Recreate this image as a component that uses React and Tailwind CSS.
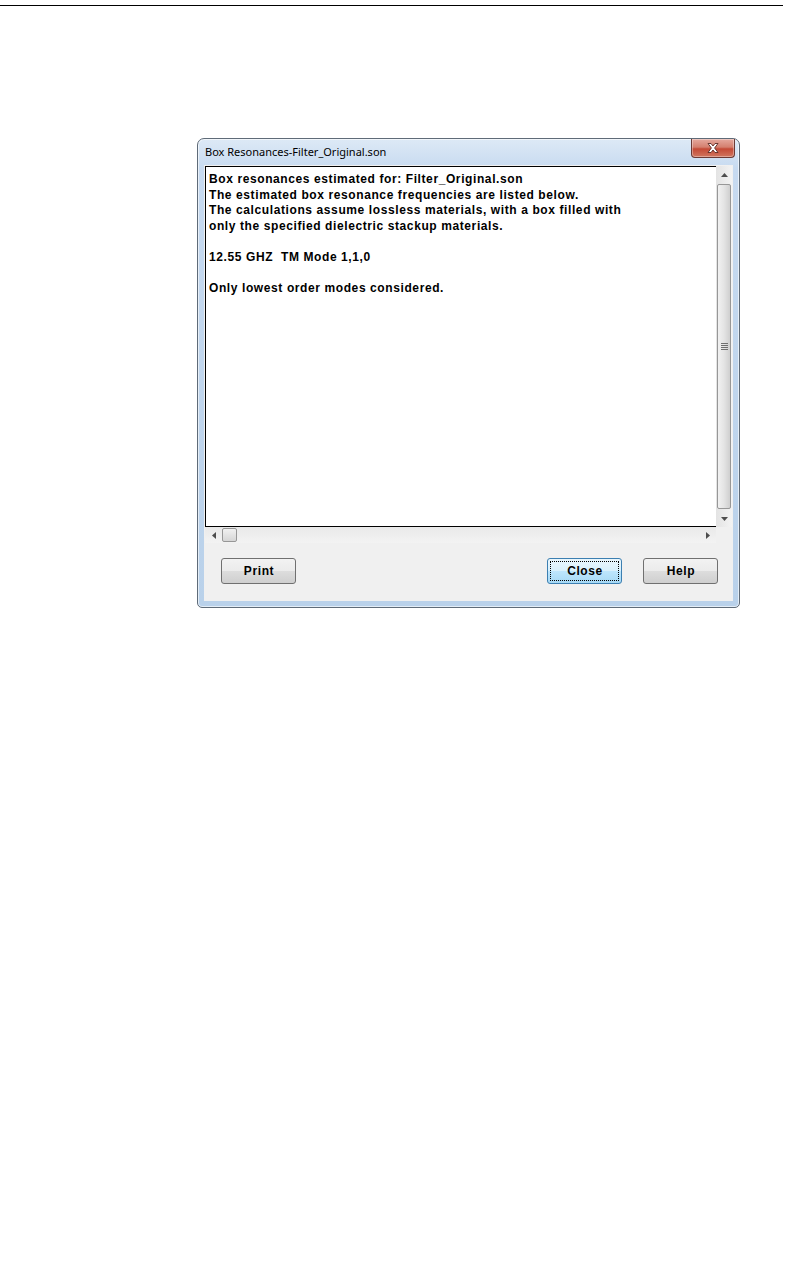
import React from 'react';

const lines = [
  'Box resonances estimated for: Filter_Original.son',
  'The estimated box resonance frequencies are listed below.',
  'The calculations assume lossless materials, with a box filled with',
  'only the specified dielectric stackup materials.',
  '',
  '12.55 GHZ  TM Mode 1,1,0',
  '',
  'Only lowest order modes considered.',
];

// small black scroll arrow
function Arrow({ dir }) {
  const pts = {
    up: '0,4 3.5,0 7,4',
    down: '0,0 7,0 3.5,4',
    left: '4,0 4,7 0,3.5',
    right: '0,0 0,7 4,3.5',
  }[dir];
  const vert = dir === 'up' || dir === 'down';
  return (
    <svg width={vert ? 7 : 4} height={vert ? 4 : 7} viewBox={vert ? '0 0 7 4' : '0 0 4 7'}>
      <polygon points={pts} fill="#4d4d4d" />
    </svg>
  );
}

function WinButton({ label, focused }) {
  return (
    <button
      type="button"
      className={
        focused
          ? 'relative h-[26px] w-[75px] rounded-[3px] border border-[#3c7fb1] bg-[linear-gradient(#eaf6fd_0%,#d9f0fc_50%,#bee6fd_50%,#a7d9f5_100%)] text-[12px] font-bold tracking-[0.6px] text-black'
          : 'relative h-[26px] w-[75px] rounded-[3px] border border-[#707070] bg-[linear-gradient(#f2f2f2_0%,#ebebeb_50%,#dddddd_50%,#cfcfcf_100%)] text-[12px] font-bold tracking-[0.6px] text-black'
      }
      style={{ fontFamily: '"Liberation Sans", Arial, sans-serif' }}
    >
      {focused && <span className="absolute inset-[2px] border border-dotted border-black" />}
      <span className="relative pl-px">{label}</span>
    </button>
  );
}

export default function App() {
  return (
    <div className="min-h-screen w-[793px] bg-white" style={{ fontFamily: '"Liberation Sans", Arial, sans-serif' }}>
      {/* page rule */}
      <div className="pt-[5px]">
        <div className="h-px w-[783px] bg-black" />
      </div>

      {/* dialog window */}
      <div className="ml-[197px] mt-[132px] flex h-[470px] w-[543px] flex-col rounded-t-[7px] rounded-b-[5px] border border-[#5f6b78] bg-[linear-gradient(#dde9f6,#c7daf0_30px,#b9d1ea)] px-[6px] pb-[6px] shadow-[inset_0_0_0_1px_rgba(255,255,255,0.6)]">
        {/* title bar */}
        <div className="flex h-[26px] items-start justify-between">
          <div className="flex h-full items-center pl-px text-[11px] text-black" style={{ fontFamily: '"Noto Sans", "Open Sans", sans-serif' }}>
            Box Resonances-Filter_Original.son
          </div>
          <div className="-mr-[2px] flex h-[19px] w-[44px] items-center justify-center rounded-b-[4px] border border-t-0 border-[#6b3a35] bg-[linear-gradient(#e5a99e,#d4806f_45%,#c44a36_55%,#d0765f)] shadow-[inset_0_0_0_1px_rgba(255,255,255,0.35)]">
            <svg width="12" height="10" viewBox="0 0 12 10">
              <path
                d="M1 0.5 L4 0.5 L6 3 L8 0.5 L11 0.5 L7.6 5 L11 9.5 L8 9.5 L6 7 L4 9.5 L1 9.5 L4.4 5 Z"
                fill="#ffffff"
                stroke="#5b2b25"
                strokeWidth="0.9"
                strokeLinejoin="round"
              />
            </svg>
          </div>
        </div>

        {/* client area */}
        <div className="flex flex-1 flex-col bg-[#f0f0f0] p-px">
          <div className="flex h-[361px]">
            <div className="flex-1 border-y border-l border-black bg-white pl-[3px] pt-[5px]">
              {lines.map((l, i) => (
                <div key={i} className="h-[15.5px] whitespace-pre text-[12px] font-bold leading-[15.5px] tracking-[0.6px] text-black">
                  {l}
                </div>
              ))}
            </div>
            {/* vertical scrollbar */}
            <div className="flex w-[16px] flex-col bg-[linear-gradient(to_right,#e3e3e3,#f3f3f3)]">
              <div className="flex h-[17px] items-center justify-center">
                <Arrow dir="up" />
              </div>
              <div className="flex-1 px-px py-px">
                <div className="flex h-full items-center justify-center rounded-[2px] border border-[#979797] bg-[linear-gradient(to_right,#f1f1f1,#e4e4e4_50%,#cfcfcf)]">
                  <div className="flex flex-col gap-px">
                    <div className="h-px w-[7px] bg-[#6f6f6f]" />
                    <div className="h-px w-[7px] bg-[#6f6f6f]" />
                    <div className="h-px w-[7px] bg-[#6f6f6f]" />
                    <div className="h-px w-[7px] bg-[#6f6f6f]" />
                  </div>
                </div>
              </div>
              <div className="flex h-[17px] items-center justify-center">
                <Arrow dir="down" />
              </div>
            </div>
          </div>

          {/* horizontal scrollbar */}
          <div className="flex h-[16px]">
            <div className="flex flex-1 items-center bg-[linear-gradient(#e9e9e9,#f3f3f3)]">
              <div className="flex w-[17px] items-center justify-center">
                <Arrow dir="left" />
              </div>
              <div className="h-[14px] w-[15px] rounded-[2px] border border-[#979797] bg-[linear-gradient(#f1f1f1,#d6d6d6)]" />
              <div className="flex-1" />
              <div className="flex w-[17px] items-center justify-center">
                <Arrow dir="right" />
              </div>
            </div>
            <div className="w-[16px] bg-[#f0f0f0]" />
          </div>

          {/* buttons */}
          <div className="mt-[15px] flex pl-[16px] pr-[14px]">
            <WinButton label="Print" />
            <div className="ml-auto flex gap-[21px]">
              <WinButton label="Close" focused />
              <WinButton label="Help" />
            </div>
          </div>
        </div>
      </div>
    </div>
  );
}
